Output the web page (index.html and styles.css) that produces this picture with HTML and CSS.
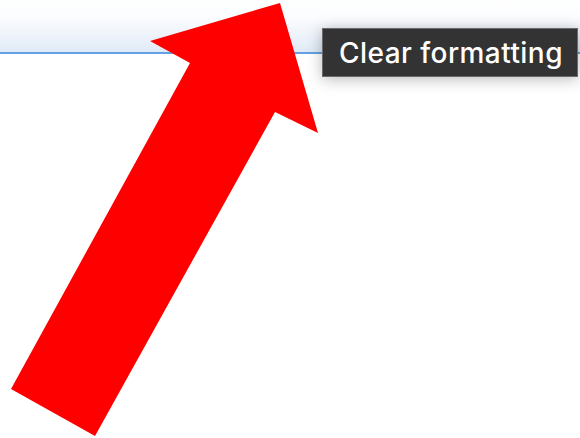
FILE: index.html
```html
<!DOCTYPE html>
<html lang="en">
<head>
<meta charset="utf-8">
<title>Editor toolbar</title>
<link rel="stylesheet" href="styles.css">
</head>
<body>
  <div class="page">
    <header class="toolbar"></header>
    <main class="editor"></main>

    <div class="tooltip" role="tooltip">Clear formatting</div>

    <svg class="pointer" width="580" height="438" viewBox="0 0 580 438" aria-hidden="true">
      <polygon points="280,3 318,133 275,112 95,436 11,389 190,63 150,41" fill="#ff0000"/>
    </svg>
  </div>
</body>
</html>
```

FILE: styles.css
```css
html, body {
  margin: 0;
  padding: 0;
  background: #ffffff;
}

.page {
  position: relative;
  width: 580px;
  height: 438px;
  overflow: hidden;
  display: flex;
  flex-direction: column;
}

.toolbar {
  height: 52px;
  flex: none;
  background: linear-gradient(to bottom, #ffffff 0px, #fafcfe 18px, #ecf2fa 38px, #dfe9f6 52px);
  border-bottom: 2px solid #62a2e2;
  box-shadow: 0 2px 5px rgba(0, 0, 0, 0.08);
}

.editor {
  flex: 1;
  background: #ffffff;
}

.tooltip {
  position: absolute;
  left: 322px;
  top: 28px;
  height: 47px;
  padding: 0 14px 0 16px;
  display: flex;
  align-items: center;
  background: #333333;
  border: 1px solid #6a6a6a;
  box-shadow: 0 2px 14px rgba(0, 0, 0, 0.28);
  color: #ffffff;
  font-family: Inter, "Liberation Sans", sans-serif;
  font-size: 28px;
  font-weight: 500;
  letter-spacing: 0.45px;
  white-space: nowrap;
}

.pointer {
  position: absolute;
  left: 0;
  top: 0;
}
```
